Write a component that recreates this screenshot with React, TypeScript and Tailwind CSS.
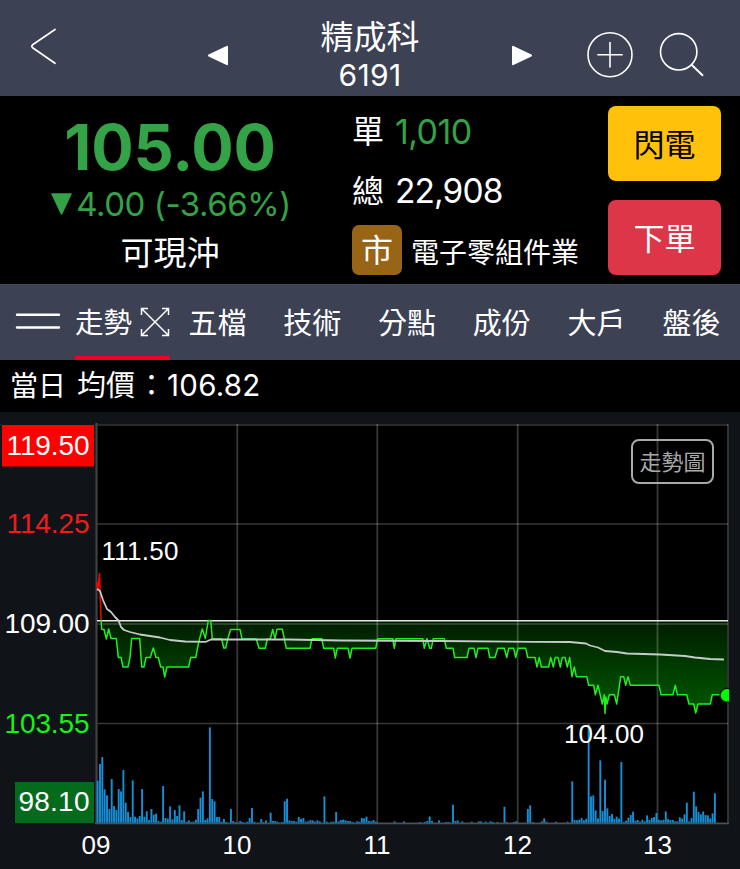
import React from "react";

const UI_FONT = "font-['Inter','Noto_Sans_CJK_TC',sans-serif]";

/* Price path: one vertex per change, in chart coordinates. */
const PRICE =
  "101,620 101.7,629.3 104,629.5 106.3,639 108.7,629 111,638.5 116.3,638.5 118.3,657.5 121,657.5 123,667 128,667 130,657.5 131.7,638.5 139.7,638.5 141.7,667 144,667 146,657.5 150.3,657.5 153.3,648 156,657.5 158.3,657.5 160.7,667 163,667 164.7,677 167,667 188.7,667 190.7,657.5 195.7,657.5 199,641 202.3,629 205.3,638.5 208.3,620.5 210.7,620.5 212.3,639 221.7,639 223.7,648 225.7,648 227.7,639 230.7,629.5 240,629.5 242,639 256.3,639 259,648.3 265.3,648.3 267.3,639 270.3,639 272.7,629.5 275,638.7 277,629.3 282.3,629.3 286.3,648.3 310,648.3 312,638.7 321.7,638.7 323.7,648.3 333.7,648.3 335.3,658 337.3,648.3 348,648.3 350,658 352,648.3 375.7,648.3 377.7,638.7 392.7,638.7 394.3,648.3 396,638.7 422.7,638.7 424.3,648.3 427,638.7 429.7,648.3 431.3,648.3 433.3,638.7 444.3,638.7 446.3,648.3 453,648.3 454.7,657.5 467,657.5 469,648.3 474,648.3 476,657.5 478,648.3 488,648.3 489.7,657.5 495,657.5 497.7,648.3 504.3,648.3 506.7,657.5 508.7,648.3 513.7,648.3 515.7,657.5 518,648.3 525.7,648.3 527.7,657.5 535,657.5 537,667 539.3,657.5 541.3,667 548.7,667 550.7,657.5 553.3,667 555.3,657.5 558,657.5 560.3,667 562.3,657.5 565,657.5 567.3,667 569.7,657.5 572,676.7 574.3,667 576.3,676.7 586.7,676.7 588.7,685.3 593.7,685.3 595.3,694.7 598,685.3 602.3,704 604.3,694.7 605,713.5 606,697 607,704 609.3,694.7 614.3,694.7 616.7,704 620.7,676.7 623.7,676.7 625.7,685.3 628,676.7 630.3,685.3 659,685.3 661,694.7 673,694.7 675.3,685.3 677.3,694.7 686.7,694.7 689,704 693.7,704 695.7,713 698,704 710.3,704 712.3,694.7 727,694.7";

const AVERAGE =
  "97,589 100,591 103,600 107,609 111,612 115,617 118.5,620.5 121,627 124,630 130,632 140,634.5 160,637.5 170,640 185,641.5 206,641.8 211,639.5 289,639.5 340,640.5 440,641 533,641.8 570,642 586,643.5 590,645.5 598,647.5 605,651 617,652 627,653.5 660,654.5 685,656 695,657.5 710,659 724,659.5";

/* Volume per minute from the open: [minute, bar height in thirds of a pixel]. */
const VOLUME: [number, number][] = [
  [0,126],[1,176],[2,197],[3,100],[4,82],[5,41],[6,131],[7,50],[8,38],[9,101],[10,94],[11,158],[12,60],[13,32],[14,17],[15,127],[16,18],[17,13],[18,20],[19,101],[20,18],[21,34],[22,8],[23,41],[24,24],[25,27],[26,5],[27,3],[28,110],[29,14],[30,12],[31,49],[32,10],[33,38],[34,20],[35,52],[36,8],[37,34],[38,3],[39,7],[40,2],[41,3],[42,9],[43,41],[44,75],[45,94],[46,8],[47,13],[48,286],[49,71],[50,64],[51,17],[52,17],[53,3],[54,11],[55,2],[57,41],[58,5],[59,2],[61,5],[62,2],[64,3],[65,14],[66,44],[67,3],[70,11],[71,2],[72,7],[74,30],[75,5],[76,5],[77,3],[79,2],[80,64],[81,72],[82,7],[83,5],[84,5],[85,3],[86,17],[87,11],[88,14],[89,3],[90,4],[91,8],[92,7],[93,3],[94,7],[95,4],[97,79],[98,3],[100,3],[101,3],[102,32],[103,4],[104,8],[105,9],[106,7],[107,5],[108,5],[109,2],[111,4],[112,3],[113,14],[114,13],[115,18],[116,5],[117,4],[118,8],[119,3],[127,4],[131,4],[138,2],[140,2],[141,5],[142,19],[143,5],[146,7],[149,2],[150,2],[152,54],[153,5],[154,7],[156,4],[160,3],[163,4],[164,4],[166,3],[168,4],[169,2],[171,2],[174,48],[175,2],[178,2],[179,4],[184,41],[185,52],[186,2],[190,4],[191,13],[192,3],[196,3],[201,3],[203,124],[204,8],[205,7],[206,9],[207,14],[208,7],[209,12],[210,295],[211,79],[212,82],[213,37],[214,13],[215,187],[216,35],[217,129],[218,43],[219,20],[220,26],[221,12],[222,18],[223,12],[224,182],[225,2],[226,6],[227,15],[228,23],[229,33],[230,6],[231,8],[232,3],[233,9],[234,4],[235,22],[236,8],[237,14],[238,17],[239,29],[240,9],[241,7],[242,9],[243,34],[244,11],[245,8],[246,8],[247,4],[248,4],[249,16],[250,12],[251,25],[252,60],[253,4],[254,14],[255,93],[256,49],[257,32],[258,25],[259,34],[260,23],[261,22],[262,13],[263,28],[264,88],
];

const TABS = ["五檔", "技術", "分點", "成份", "大戶", "盤後"];
const HOURS = [
  { label: "09", x: 96 },
  { label: "10", x: 237 },
  { label: "11", x: 377 },
  { label: "12", x: 517.5 },
  { label: "13", x: 657.5 },
];

function Header() {
  return (
    <header className="flex h-24 items-start bg-[#3c4154]">
      <button className="ml-[30px] mt-[28px]">
        <svg width="27" height="37" viewBox="0 0 27 37" fill="none" stroke="#fff" strokeWidth="1.7" strokeLinecap="round" strokeLinejoin="round">
          <path d="M25 1.5 2.6 16.8Q1 18.2 2.6 19.7L25 35.3" />
        </svg>
      </button>
      <button className="ml-[150px] mt-[45px]">
        <svg width="22" height="21" viewBox="0 0 22 21">
          <path d="M2 10.5 20 1.8v17.4Z" fill="#fff" stroke="#fff" strokeWidth="2" strokeLinejoin="round" />
        </svg>
      </button>
      <div className="ml-[66px] mt-[18px] flex w-[150px] flex-col items-center text-white">
        <div className="text-[33px] leading-[38px]">精成科</div>
        <div className="mt-[2px] text-[30px] leading-[34px] tracking-[0.4px]">6191</div>
      </div>
      <button className="ml-[66px] mt-[45px]">
        <svg width="22" height="21" viewBox="0 0 22 21">
          <path d="M20 10.5 2 1.8v17.4Z" fill="#fff" stroke="#fff" strokeWidth="2" strokeLinejoin="round" />
        </svg>
      </button>
      <button className="ml-[54px] mt-[31px]">
        <svg width="47" height="47" viewBox="0 0 47 47" fill="none" stroke="#fff" strokeWidth="1.6">
          <circle cx="23" cy="23.7" r="22" />
          <path d="M10.3 23.7h25.4M23 11v25.4" />
        </svg>
      </button>
      <button className="ml-[25px] mt-[32px]">
        <svg width="46" height="46" viewBox="0 0 46 46" fill="none" stroke="#fff" strokeWidth="1.6">
          <circle cx="19.7" cy="19.8" r="18.2" />
          <path d="M32.3 32.5 44 43.8" strokeWidth="2" />
        </svg>
      </button>
    </header>
  );
}

function Quote() {
  return (
    <section className="flex h-[188px] bg-black text-white">
      <div className="flex w-[340px] flex-col items-center pt-[18px]">
        <div className="text-[63px] font-bold leading-[66px] tracking-[-0.2px] text-[#34a246]">105.00</div>
        <div className="mt-[6px] flex items-center gap-[4px] whitespace-nowrap pl-[2px] text-[33px] leading-[36px] tracking-[-0.45px] text-[#34a246]">
          <svg width="21" height="22" viewBox="0 0 21 22" fill="currentColor">
            <path d="M1 1h19L10.5 21Z" stroke="currentColor" strokeWidth="1.5" strokeLinejoin="round" />
          </svg>
          <span>4.00 (-3.66%)</span>
        </div>
        <div className="mt-[11px] text-[33px] leading-[40px]">可現沖</div>
      </div>
      <div className="flex w-[268px] flex-col pl-[12px] pt-[15px]">
        <div className="flex h-[42px] items-center gap-[11px]">
          <span className="text-[32px]">單</span>
          <span className="pb-[2px] text-[34px] tracking-[-0.6px] text-[#34a246]">1,010</span>
        </div>
        <div className="mt-[18px] flex h-[42px] items-center gap-[11px]">
          <span className="text-[32px]">總</span>
          <span className="pb-[2px] text-[33.5px] tracking-[-0.9px]">22,908</span>
        </div>
        <div className="mt-[12px] flex h-[50px] items-center gap-[9px]">
          <span className="flex h-[50px] w-[50px] items-center justify-center rounded-[7px] bg-[#986415] pt-[2px] text-[32px] leading-none">市</span>
          <span className="whitespace-nowrap pt-[6px] text-[28px] leading-none">電子零組件業</span>
        </div>
      </div>
      <div className="flex flex-col gap-[19px] pt-[10px]">
        <button className="h-[75px] w-[113px] rounded-lg bg-[#ffc10a] pt-[2px] text-[31px] leading-none text-black">閃電</button>
        <button className="h-[75px] w-[113px] rounded-lg bg-[#dd3648] pt-[2px] text-[31px] leading-none text-white">下單</button>
      </div>
    </section>
  );
}

function Tabs() {
  return (
    <nav className="flex h-[76px] border-t border-[#3f4b58] bg-[#3c4154] text-[29px] text-white">
      <button className="w-[75px] pb-[3px] pl-[15px]">
        <svg className="block" width="46" height="20" viewBox="0 0 46 20" stroke="#fff" strokeWidth="2.4" strokeLinecap="round">
          <path d="M2 3.8h42M2 16.500h42" />
        </svg>
      </button>
      <button className="flex w-[95px] items-center justify-between whitespace-nowrap border-b-4 border-[#f00022] pt-[4px]">
        <span className="pt-[2px] text-[28.500px]">走勢</span>
        <svg width="30" height="30" viewBox="0 0 30 30" fill="none" stroke="#fff" strokeWidth="1.5" className="mb-[2px]">
          <path d="M1.5 1.5 28.5 28.5M28.5 1.5 1.5 28.5M1.5 8V1.5H8M22 1.5h6.500V8M1.500 22v6.500H8M22 28.500h6.500V22" />
        </svg>
      </button>
      {TABS.map((tab) => (
        <button key={tab} className="w-[94.8px] shrink-0 pt-[2px]">{tab}</button>
      ))}
    </nav>
  );
}

function TrendChart() {
  return (
    <section className="relative h-[457px] bg-[#101418]">
      <svg className="block" width="740" height="457" viewBox="0 412 740 457" fontFamily="'Liberation Sans', Arial, sans-serif">
        <defs>
          <linearGradient id="fall" gradientUnits="userSpaceOnUse" x1="0" y1="620" x2="0" y2="714">
            <stop offset="0" stopColor="#001c00" />
            <stop offset="1" stopColor="#005a00" />
          </linearGradient>
          <clipPath id="plot">
            <rect x="96" y="424" width="633" height="400" />
          </clipPath>
        </defs>
        <rect x="96" y="424" width="633" height="400" fill="#000" />
        <polygon points={`101,620.5 ${PRICE} 727,620.5`} fill="url(#fall)" />

        <g stroke="#fff" strokeOpacity="0.22" strokeWidth="1.8">
          <path d="M97 425H728M97 524H728M97 624H728M97 723.500H728" strokeWidth="1.4" />
          <path d="M237.300 424V823M377.300 424V823M517.700 424V823M657.500 424V823M728 424V823" />
        </g>
        <path d="M96.500 423V824" stroke="#3f4245" strokeWidth="2.200" />
        <path d="M95 823.300H729" stroke="#4c5054" strokeWidth="1.800" />

        <g fill="#1590d8">
          {VOLUME.map(([minute, h]) => (
            <rect key={minute} x={96.7 + minute * 2.338} y={822.7 - h / 3} width={1.9} height={h / 3} />
          ))}
        </g>

        <path d="M97 620.700H728" stroke="#fff" strokeOpacity="0.9" strokeWidth="1.500" />
        <polyline points={PRICE} fill="none" stroke="#20ee20" strokeWidth="1.500" strokeLinejoin="round" />
        <polyline points="96.700,582 98,589 99.500,573 101,620" fill="none" stroke="#f00" strokeWidth="1.500" />
        <polyline points={AVERAGE} fill="none" stroke="#c4ccc8" strokeWidth="1.800" strokeLinejoin="round" />
        <circle cx="727" cy="695.300" r="7" fill="#00fa00" stroke="#002000" strokeWidth="1.500" clipPath="url(#plot)" />

        <rect x="2" y="425" width="92" height="41.500" fill="#f00" />
        <rect x="15" y="782" width="79" height="41" fill="#046b1c" />
        <g fontSize="28" textAnchor="end" fill="#fff">
          <text x="89.5" y="455" textLength="83">119.50</text>
          <text x="89.5" y="533" textLength="83" fill="#ee1c1c">114.25</text>
          <text x="89.5" y="633" textLength="85">109.00</text>
          <text x="89.5" y="732.500" textLength="85" fill="#17f217">103.55</text>
          <text x="89.5" y="811" textLength="71">98.10</text>
        </g>
        <g fontSize="26" textAnchor="middle" fill="#fff">
          {HOURS.map((hour) => (
            <text key={hour.label} x={hour.x} y="853.500">{hour.label}</text>
          ))}
          <text x="140" y="560" textLength="77">111.50</text>
          <text x="604" y="743" textLength="80">104.00</text>
        </g>
      </svg>
      <button className="absolute left-[631px] top-[27px] flex h-[45px] w-[83px] items-center justify-center rounded-lg border-2 border-[#a9a9a9] pt-[2px] text-[22px] text-[#a9a9a9]">
        走勢圖
      </button>
    </section>
  );
}

export default function App() {
  return (
    <main lang="zh-Hant" className={`w-[740px] overflow-hidden bg-black ${UI_FONT}`}>
      <Header />
      <Quote />
      <Tabs />
      <div className="flex h-[52px] items-center whitespace-nowrap bg-black pb-px pl-[10px] text-[28px] leading-none text-white">
        <span>當日</span>
        <span className="ml-[11px] text-[29px]">均價</span>
        <span className="ml-[2px] w-[30px] text-[29px]">：</span>
        <span className="text-[29.5px] tracking-[0.25px]">106.82</span>
      </div>
      <TrendChart />
    </main>
  );
}
